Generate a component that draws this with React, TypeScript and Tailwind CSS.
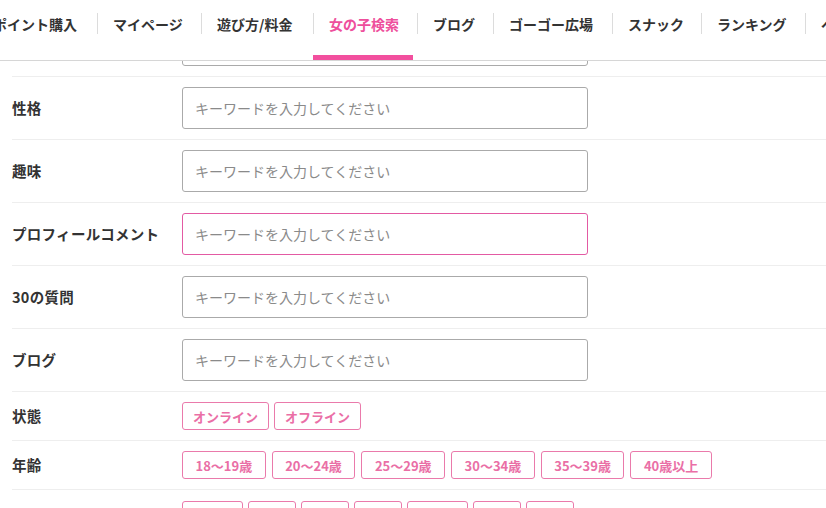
import React from "react";

const navItems: { label: string; w: string }[] = [
  { label: "ポイント購入", w: "w-[119px]" },
  { label: "マイページ", w: "w-[103px]" },
  { label: "遊び方/料金", w: "w-[111px]" },
  { label: "女の子検索", w: "w-[103px]" },
  { label: "ブログ", w: "w-[75px]" },
  { label: "ゴーゴー広場", w: "w-[118px]" },
  { label: "スナック", w: "w-[88px]" },
  { label: "ランキング", w: "w-[103px]" },
  { label: "ペ", w: "w-[40px]" },
];

const inputRows = ["性格", "趣味", "プロフィールコメント", "30の質問", "ブログ"];

function Chip({ label, pad = "px-[11px]" }: { label: string; pad?: string }) {
  return (
    <span
      className={`inline-flex h-[28px] items-center justify-center rounded-[3px] border border-[#ea7aab] text-[13px] font-bold leading-none text-[#ea6fa6] ${pad}`}
    >
      {label}
    </span>
  );
}

export default function App() {
  return (
    <div
      className="h-[508px] w-[826px] overflow-hidden bg-white text-[#333]"
      style={{ fontFamily: '"Noto Sans CJK JP", "Noto Sans", sans-serif' }}
    >
      {/* nav */}
      <div className="relative h-[61px] border-b border-[#d6d6d6]">
        <div className="ml-[-22px] flex h-[60px] items-start whitespace-nowrap pt-[13px]">
          {navItems.map((n, i) => (
            <div key={n.label} className="flex shrink-0 items-center">
              {i > 0 && <span className="h-[21px] w-px bg-[#dcdcdc]" />}
              <div
                className={`relative flex h-[21px] shrink-0 items-center pl-[15px] text-[14px] font-bold leading-none ${n.w} ${
                  n.label === "女の子検索" ? "text-[#ee4f9c]" : "text-[#333]"
                }`}
              >
                {n.label}
                {n.label === "女の子検索" && (
                  <span className="absolute left-[-1px] right-[4px] top-[42px] h-[5px] bg-[#f24f9e]" />
                )}
              </div>
            </div>
          ))}
        </div>
      </div>

      {/* partially visible first row */}
      <div className="ml-[12px] flex h-[16px] items-end overflow-hidden border-b border-[#eeeeee] pb-[10px]">
        <div className="ml-[170px] h-[42px] w-[406px] shrink-0 rounded-[3px] border border-[#aaaaaa]" />
      </div>

      {inputRows.map((l) => (
        <div
          key={l}
          className="ml-[12px] flex h-[63px] items-center border-b border-[#eeeeee]"
        >
          <div className="w-[170px] shrink-0 text-[14.5px] font-bold tracking-[0.3px]">{l}</div>
          <div
            className={`flex h-[42px] w-[406px] items-center rounded-[3px] border px-[12px] text-[14px] text-[#8a8a8a] ${
              l === "プロフィールコメント" ? "border-[#e35aa3]" : "border-[#aaaaaa]"
            }`}
          >
            キーワードを入力してください
          </div>
        </div>
      ))}

      <div className="ml-[12px] flex h-[49px] items-center border-b border-[#eeeeee]">
        <div className="w-[170px] shrink-0 text-[14.5px] font-bold tracking-[0.3px]">状態</div>
        <div className="flex gap-[5px]">
          <Chip label="オンライン" pad="px-[10px]" />
          <Chip label="オフライン" pad="px-[10px]" />
        </div>
      </div>

      <div className="ml-[12px] flex h-[49px] items-center border-b border-[#eeeeee]">
        <div className="w-[170px] shrink-0 text-[14.5px] font-bold tracking-[0.3px]">年齢</div>
        <div className="flex gap-[6px]">
          {["18～19歳", "20～24歳", "25～29歳", "30～34歳", "35～39歳", "40歳以上"].map((c) => (
            <Chip key={c} label={c} pad="px-[12.5px]" />
          ))}
        </div>
      </div>

      <div className="ml-[12px] flex h-[49px] items-center">
        <div className="w-[170px] shrink-0 text-[14.5px] font-bold tracking-[0.3px]">スタイル</div>
        <div className="flex gap-[5px]">
          {[
            ["スリム", "w-[61px]"],
            ["普通", "w-[48px]"],
            ["細身", "w-[48px]"],
            ["長身", "w-[48px]"],
            ["グラマ", "w-[61px]"],
            ["小柄", "w-[48px]"],
            ["美脚", "w-[48px]"],
          ].map(([c, w]) => (
            <Chip key={c} label={c} pad={w} />
          ))}
        </div>
      </div>
    </div>
  );
}
